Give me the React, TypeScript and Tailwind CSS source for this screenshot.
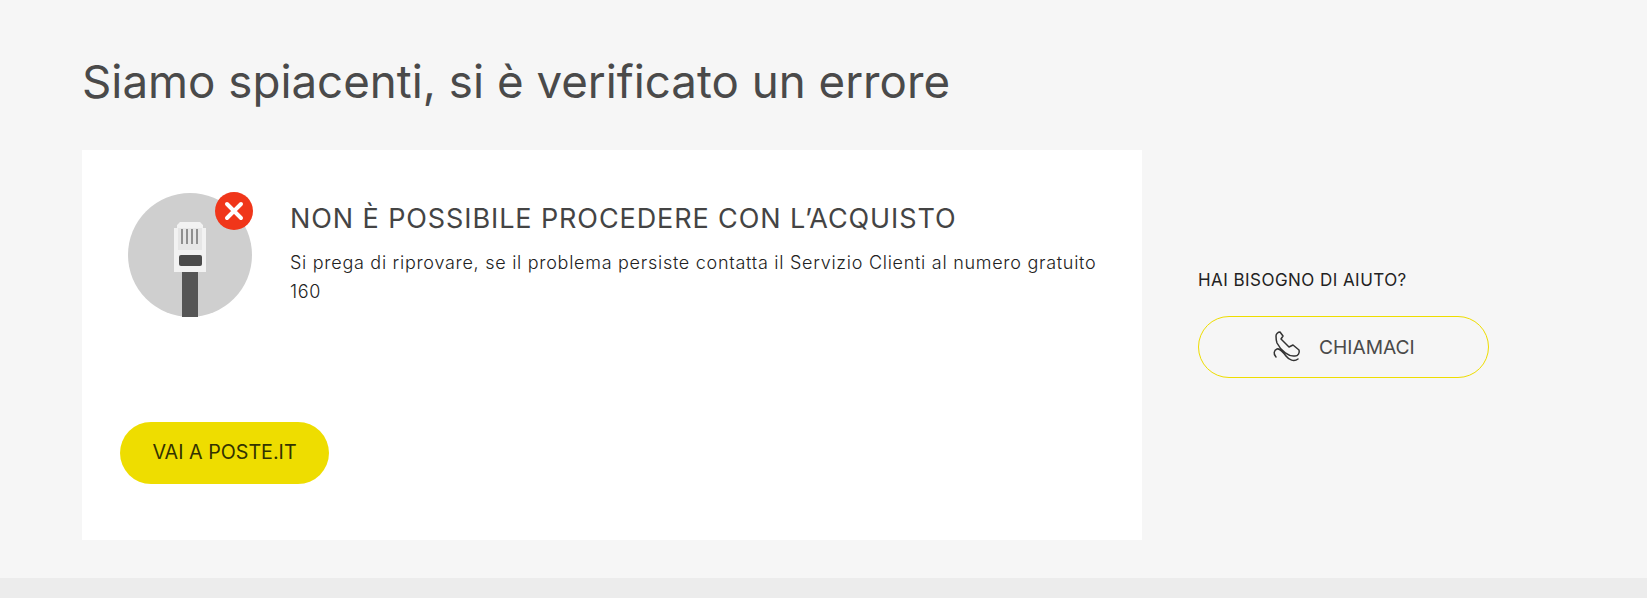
export default function App() {
  const font = { fontFamily: 'Inter, "Liberation Sans", sans-serif' };
  return (
    <div style={font} className="h-[598px] overflow-hidden bg-[#f6f6f6] flex flex-col">
      <div className="flex-1 pl-[82px] pt-[52px]">
        <h1 className="text-[45.7px] leading-[60px] font-normal text-[#4a4a4a] h-[98px]">Siamo spiacenti, si è verificato un errore</h1>
        <div className="flex">
          <div className="w-[1060px] h-[390px] bg-white flex flex-col pl-[38px] pt-[42px]">
            <div className="flex h-[230px]">
              <div className="relative w-[132px] h-[126px] ml-[8px] shrink-0">
                <svg width="132" height="126" viewBox="0 0 132 126">
                  <circle cx="62" cy="63" r="62" fill="#cfcfcf" />
                  <path d="M46 80V36h3v-3l3-3h20l3 3v3h3v44z" fill="#f2f2f2" />
                  <rect x="50" y="36" width="24" height="22" fill="#e6e6e6" />
                  <g stroke="#8f8f8f" strokeWidth="2">
                    <path d="M54 37v15M59 37v15M64 37v15M69 37v15" />
                  </g>
                  <rect x="51" y="63" width="23" height="11" rx="2" fill="#4b4b4b" />
                  <path d="M54 80h16v45h-16z" fill="#555555" />
                </svg>
                <svg className="absolute left-[87px] top-0" width="38" height="38" viewBox="0 0 38 38">
                  <circle cx="19" cy="19" r="19" fill="#f0361a" />
                  <path d="M12 12l14 14M26 12l-14 14" stroke="#fff" strokeWidth="4" strokeLinecap="round" />
                </svg>
              </div>
              <div className="ml-[30px] w-[820px]">
                <h2 className="text-[27px] leading-[32px] mt-[11px] font-normal tracking-[0.9px] text-[#444444]">NON È POSSIBILE PROCEDERE CON L’ACQUISTO</h2>
                <p className="text-[18px] leading-[28.5px] mt-[14px] font-light tracking-[0.72px] text-[#222222]">Si prega di riprovare, se il problema persiste contatta il Servizio Clienti al numero gratuito 160</p>
              </div>
            </div>
            <div className="w-[209px] h-[62px] rounded-full bg-[#eedd00] flex items-center justify-center text-[19.7px] text-[#333300]">VAI A POSTE.IT</div>
          </div>
          <div className="ml-[56px] pt-[120px]">
            <div className="text-[17px] leading-[20px] tracking-[0.45px] text-[#222222]">HAI BISOGNO DI AIUTO?</div>
            <div className="mt-[26px] w-[291px] h-[62px] rounded-full border border-[#eedd00] flex items-center pl-[66px] gap-[10px] text-[19.2px] text-[#4a4a4a]">
              <svg width="44" height="42" viewBox="0 0 44 42" fill="none" stroke="#333" strokeWidth="1.5" strokeLinejoin="round" strokeLinecap="round">
                <path d="M11 10C11 8 13 6 15 6L18 10L16 13L24 21L28 19L34 24C35 27 33 30 30 30C24 31 16 25 12 17C11 14 11 12 11 10Z" />
                <path d="M11 31C8 28 9 24 12 23C15 22 18 26 21 30C24 34 29 36 33 33" />
              </svg>
              CHIAMACI
            </div>
          </div>
        </div>
      </div>
      <div className="h-[20px] bg-[#ececec]" />
    </div>
  );
}
